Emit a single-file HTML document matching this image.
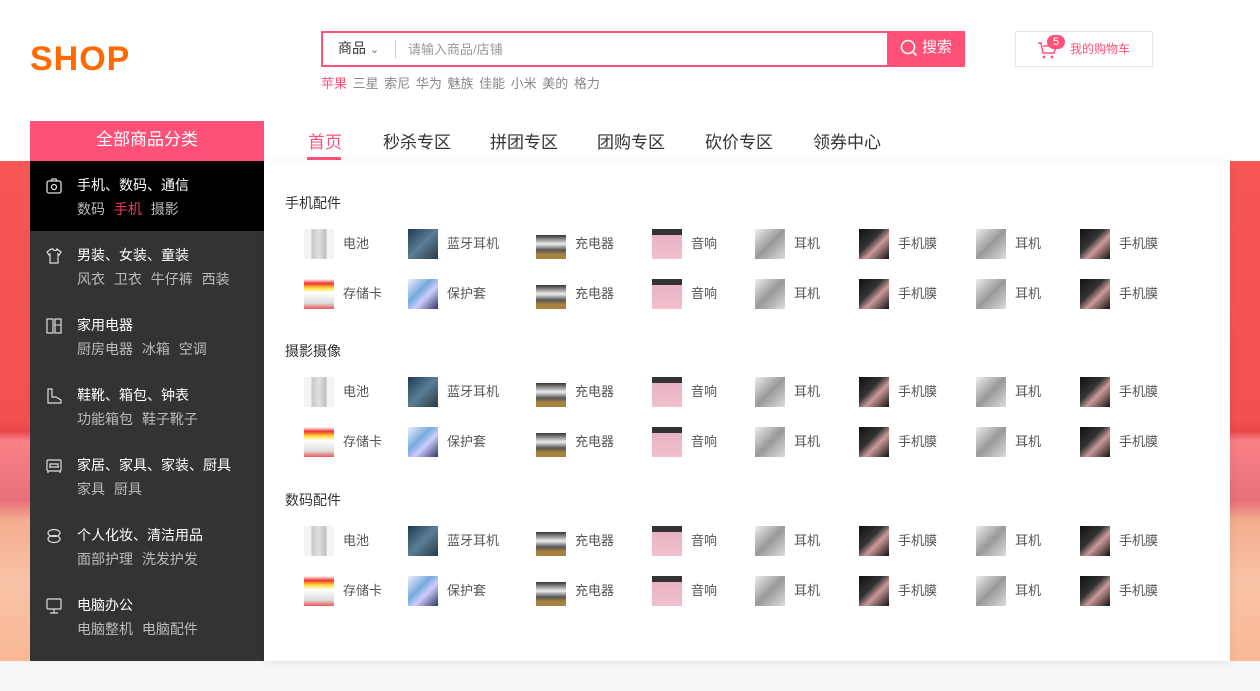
<!DOCTYPE html>
<html><head><meta charset="utf-8">
<style>
*{margin:0;padding:0;box-sizing:border-box}
body{width:1260px;height:691px;position:relative;overflow:hidden;background:#f7f7f7;font-family:"Liberation Sans","Noto Sans CJK SC",sans-serif;color:#333}
.a{position:absolute}
.hdr{left:0;top:0;width:1260px;height:161px;background:#fff}
.banner{left:0;top:161px;width:1260px;height:500px;background:linear-gradient(180deg,#f65656 0%,#f35050 52%,#e8464a 54%,#f98086 56%,#e8707a 68%,#f5ad90 72%,#f9c2a6 84%,#f9b896 100%)}
.logo{left:30px;top:40px;font:bold 34px "Liberation Sans",sans-serif;color:#ff6a00;letter-spacing:1px}
.search{left:321px;top:31px;width:644px;height:36px;border:2px solid #ff5078;background:#fff}
.search .btn{position:absolute;right:-2px;top:-2px;width:78px;height:36px;background:#ff5078;color:#fff;font-size:15px;line-height:34px;padding-left:35px}
.kw{left:321px;top:73px;font-size:13px;color:#888;word-spacing:2px}
.cart{left:1015px;top:31px;width:138px;height:36px;border:1px solid #e6e6e6;font-size:12px;color:#ff5078;line-height:34px;padding-left:54px}
.allcat{left:30px;top:121px;width:234px;height:40px;background:#ff5078;color:#fff;font-size:17px;text-align:center;line-height:38px}
.nav{top:128px;font-size:17px;color:#333}
.side{left:30px;top:161px;width:234px;height:500px;background:#333}
.cat{position:absolute;left:0;width:234px;height:70px}
.cat .t{position:absolute;left:47px;top:14px;font-size:14px;color:#fff}
.cat .s{position:absolute;left:47px;top:38px;font-size:14px;color:#bbb;word-spacing:5px}
.cat svg{position:absolute;left:16px;top:17px}
.panel{left:264px;top:161px;width:966px;height:500px;background:#fff;box-shadow:0 2px 8px rgba(0,0,0,.08)}
.sec{font-size:14px;color:#333;left:285px}
.it{position:absolute;height:30px;font-size:13px;color:#555;line-height:30px}
.it i{display:inline-block;width:30px;height:30px;vertical-align:top;margin-right:9px}
.t1{background:linear-gradient(90deg,#f4f4f4 0,#f4f4f4 25%,#c8c8c8 25%,#e0e0e0 50%,#bdbdbd 75%,#f4f4f4 75%)}
.t2{background:linear-gradient(135deg,#1d3a55,#5a7e96 50%,#2a3a44)}
.t3{background:linear-gradient(180deg,#fff 0,#fff 20%,#333 20%,#eee 50%,#555 70%,#a8823e 85%)}
.t4{background:linear-gradient(180deg,#333 0,#333 20%,#e9b2c2 20%,#f0c0cc)}
.t5{background:linear-gradient(135deg,#eee,#999 50%,#ddd)}
.t6{background:linear-gradient(135deg,#111 0,#333 40%,#c99 60%,#111)}
.t7{background:linear-gradient(180deg,#fff 0,#e33 15%,#fd3 30%,#fff 45%,#ddd 80%,#e55 100%)}
.t8{background:linear-gradient(135deg,#eef 0,#7ad 40%,#ccf 60%,#336)}
</style></head><body>
<div class="a hdr"></div>
<div class="a banner"></div>
<div class="a logo">SHOP</div>
<div class="a search">
 <span class="a" style="left:15px;top:5px;font-size:14px;color:#333">商品 <span style="font-size:11px;color:#666">&#8964;</span></span>
 <span class="a" style="left:72px;top:7px;width:1px;height:18px;background:#ccc"></span>
 <span class="a" style="left:85px;top:6px;font-size:13px;color:#999">请输入商品/店铺</span>
 <div class="btn"><svg class="a" style="left:13px;top:8px" width="18" height="18" viewBox="0 0 18 18"><circle cx="8" cy="8" r="6.5" fill="none" stroke="#fff" stroke-width="1.6"/><path d="M12.5 12.5L16.5 16.5" stroke="#fff" stroke-width="1.6"/></svg>搜索</div>
</div>
<div class="a kw"><span style="color:#ff5078">苹果</span> 三星 索尼 华为 魅族 佳能 小米 美的 格力</div>
<div class="a cart"><svg class="a" style="left:21px;top:8px" width="20" height="20" viewBox="0 0 20 20"><path d="M1 3h3l2 10h11l2-7H6" fill="none" stroke="#ff5078" stroke-width="1.5"/><circle cx="7" cy="17" r="1.4" fill="#ff5078"/><circle cx="15" cy="17" r="1.4" fill="#ff5078"/></svg><span class="a" style="left:31px;top:3px;width:18px;height:14px;border-radius:7px;background:#ff5078;color:#fff;font-size:11px;line-height:14px;text-align:center">5</span>我的购物车</div>
<div class="a allcat">全部商品分类</div>
<div class="a nav" style="left:308px;color:#ff5078">首页</div>
<div class="a" style="left:307px;top:157px;width:34px;height:3px;background:#ff5078"></div>
<div class="a nav" style="left:383px">秒杀专区</div>
<div class="a nav" style="left:490px">拼团专区</div>
<div class="a nav" style="left:597px">团购专区</div>
<div class="a nav" style="left:705px">砍价专区</div>
<div class="a nav" style="left:813px">领券中心</div>
<div class="a side">
 <div class="cat" style="top:0;background:#000"><svg width="16" height="16" viewBox="0 0 16 16"><rect x="1" y="3" width="14" height="12" rx="2" fill="none" stroke="#ddd" stroke-width="1.3"/><circle cx="8" cy="9" r="2.5" fill="none" stroke="#ddd" stroke-width="1.3"/><path d="M5 3l1-2h4l1 2" fill="none" stroke="#ddd" stroke-width="1.3"/></svg><div class="t">手机、数码、通信</div><div class="s">数码 <span style="color:#ff3355">手机</span> 摄影</div></div>
 <div class="cat" style="top:70px"><svg width="16" height="16" viewBox="0 0 16 16"><path d="M5 1L1 4l2 3 1-1v9h8V6l1 1 2-3-4-3c0 2-4 2-4 0z" fill="none" stroke="#ddd" stroke-width="1.2"/></svg><div class="t">男装、女装、童装</div><div class="s">风衣 卫衣 牛仔裤 西装</div></div>
 <div class="cat" style="top:140px"><svg width="16" height="16" viewBox="0 0 16 16"><rect x="1" y="1" width="6" height="14" fill="none" stroke="#ddd" stroke-width="1.2"/><rect x="9" y="1" width="6" height="14" fill="none" stroke="#ddd" stroke-width="1.2"/><path d="M9 7h6" stroke="#ddd"/></svg><div class="t">家用电器</div><div class="s">厨房电器 冰箱 空调</div></div>
 <div class="cat" style="top:210px"><svg width="16" height="16" viewBox="0 0 16 16"><path d="M2 1h4v8h4l5 3v3H2z" fill="none" stroke="#ddd" stroke-width="1.2"/></svg><div class="t">鞋靴、箱包、钟表</div><div class="s">功能箱包 鞋子靴子</div></div>
 <div class="cat" style="top:280px"><svg width="16" height="16" viewBox="0 0 16 16"><rect x="1" y="2" width="14" height="11" rx="1" fill="none" stroke="#ddd" stroke-width="1.2"/><path d="M3 9h10M4 9V6h8v3M2 13v2M14 13v2" fill="none" stroke="#ddd" stroke-width="1.2"/></svg><div class="t">家居、家具、家装、厨具</div><div class="s">家具 厨具</div></div>
 <div class="cat" style="top:350px"><svg width="16" height="16" viewBox="0 0 16 16"><ellipse cx="8" cy="5" rx="6" ry="3.5" fill="none" stroke="#ddd" stroke-width="1.2"/><ellipse cx="8" cy="11" rx="6" ry="3.5" fill="none" stroke="#ddd" stroke-width="1.2"/></svg><div class="t">个人化妆、清洁用品</div><div class="s">面部护理 洗发护发</div></div>
 <div class="cat" style="top:420px"><svg width="16" height="16" viewBox="0 0 16 16"><rect x="1" y="1" width="14" height="10" rx="1" fill="none" stroke="#ddd" stroke-width="1.2"/><path d="M8 11v4M4 15h8" stroke="#ddd" stroke-width="1.2"/></svg><div class="t">电脑办公</div><div class="s">电脑整机 电脑配件</div></div>
</div>
<div class="a panel"></div>
<div class="a sec" style="top:193px">手机配件</div>
<div class="a sec" style="top:341px">摄影摄像</div>
<div class="a sec" style="top:490px">数码配件</div>

<div class="it" style="left:304px;top:229px"><i class="t1"></i>电池</div><div class="it" style="left:408px;top:229px"><i class="t2"></i>蓝牙耳机</div><div class="it" style="left:536px;top:229px"><i class="t3"></i>充电器</div><div class="it" style="left:652px;top:229px"><i class="t4"></i>音响</div><div class="it" style="left:755px;top:229px"><i class="t5"></i>耳机</div><div class="it" style="left:859px;top:229px"><i class="t6"></i>手机膜</div><div class="it" style="left:976px;top:229px"><i class="t5"></i>耳机</div><div class="it" style="left:1080px;top:229px"><i class="t6"></i>手机膜</div>
<div class="it" style="left:304px;top:279px"><i class="t7"></i>存储卡</div><div class="it" style="left:408px;top:279px"><i class="t8"></i>保护套</div><div class="it" style="left:536px;top:279px"><i class="t3"></i>充电器</div><div class="it" style="left:652px;top:279px"><i class="t4"></i>音响</div><div class="it" style="left:755px;top:279px"><i class="t5"></i>耳机</div><div class="it" style="left:859px;top:279px"><i class="t6"></i>手机膜</div><div class="it" style="left:976px;top:279px"><i class="t5"></i>耳机</div><div class="it" style="left:1080px;top:279px"><i class="t6"></i>手机膜</div>

<div class="it" style="left:304px;top:377px"><i class="t1"></i>电池</div><div class="it" style="left:408px;top:377px"><i class="t2"></i>蓝牙耳机</div><div class="it" style="left:536px;top:377px"><i class="t3"></i>充电器</div><div class="it" style="left:652px;top:377px"><i class="t4"></i>音响</div><div class="it" style="left:755px;top:377px"><i class="t5"></i>耳机</div><div class="it" style="left:859px;top:377px"><i class="t6"></i>手机膜</div><div class="it" style="left:976px;top:377px"><i class="t5"></i>耳机</div><div class="it" style="left:1080px;top:377px"><i class="t6"></i>手机膜</div>
<div class="it" style="left:304px;top:427px"><i class="t7"></i>存储卡</div><div class="it" style="left:408px;top:427px"><i class="t8"></i>保护套</div><div class="it" style="left:536px;top:427px"><i class="t3"></i>充电器</div><div class="it" style="left:652px;top:427px"><i class="t4"></i>音响</div><div class="it" style="left:755px;top:427px"><i class="t5"></i>耳机</div><div class="it" style="left:859px;top:427px"><i class="t6"></i>手机膜</div><div class="it" style="left:976px;top:427px"><i class="t5"></i>耳机</div><div class="it" style="left:1080px;top:427px"><i class="t6"></i>手机膜</div>

<div class="it" style="left:304px;top:526px"><i class="t1"></i>电池</div><div class="it" style="left:408px;top:526px"><i class="t2"></i>蓝牙耳机</div><div class="it" style="left:536px;top:526px"><i class="t3"></i>充电器</div><div class="it" style="left:652px;top:526px"><i class="t4"></i>音响</div><div class="it" style="left:755px;top:526px"><i class="t5"></i>耳机</div><div class="it" style="left:859px;top:526px"><i class="t6"></i>手机膜</div><div class="it" style="left:976px;top:526px"><i class="t5"></i>耳机</div><div class="it" style="left:1080px;top:526px"><i class="t6"></i>手机膜</div>
<div class="it" style="left:304px;top:576px"><i class="t7"></i>存储卡</div><div class="it" style="left:408px;top:576px"><i class="t8"></i>保护套</div><div class="it" style="left:536px;top:576px"><i class="t3"></i>充电器</div><div class="it" style="left:652px;top:576px"><i class="t4"></i>音响</div><div class="it" style="left:755px;top:576px"><i class="t5"></i>耳机</div><div class="it" style="left:859px;top:576px"><i class="t6"></i>手机膜</div><div class="it" style="left:976px;top:576px"><i class="t5"></i>耳机</div><div class="it" style="left:1080px;top:576px"><i class="t6"></i>手机膜</div>
</body></html>
